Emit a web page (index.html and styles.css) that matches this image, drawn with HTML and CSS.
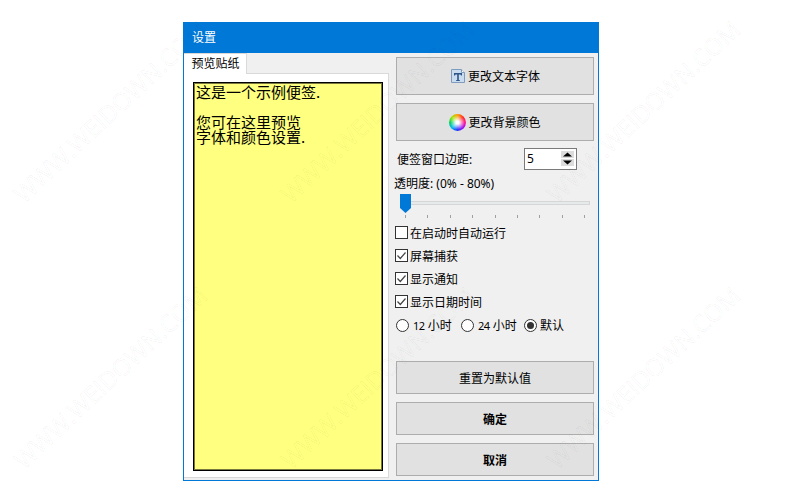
FILE: index.html
```html
<!DOCTYPE html>
<html lang="zh">
<head>
<meta charset="utf-8">
<title>设置</title>
<link rel="stylesheet" href="styles.css">
</head>
<body>
<div class="window">
  <div class="titlebar">设置</div>
  <div class="content">
    <div class="left">
      <div class="tabs"><div class="tab">预览贴纸</div></div>
      <div class="panel">
        <div class="sticky">这是一个示例便签.<br><br>您可在这里预览<br>字体和颜色设置.</div>
      </div>
    </div>
    <div class="right">
      <div class="btn-group top">
        <button class="btn big"><svg class="ico" viewBox="0 0 16 16"><path d="M1.500 1.500h10l3 3v10h-13z" fill="#c9dcf0" stroke="#7f9cbc"/><path d="M11.500 1.500v3h3" fill="#fff" stroke="#7f9cbc"/><path d="M4 5h8v2.500h-1L10.500 6.500H8.800v5.500h1v1H6.200v-1h1V6.500H5.500L5 7.500H4z" fill="#2f5488"/></svg>更改文本字体</button>
        <button class="btn big"><span class="wheel"></span>更改背景颜色</button>
      </div>
      <div class="spin-row">
        <span class="spin-label">便签窗口边距:</span>
        <div class="spin">
          <span class="spin-val">5</span>
          <span class="arrows"><span class="arr"><svg viewBox="0 0 13 7"><path d="M6.500 1.500L11 5.500H2z" fill="#000"/></svg></span><span class="arr"><svg viewBox="0 0 13 7"><path d="M6.500 5.500L2 1.500h9z" fill="#000"/></svg></span></span>
        </div>
      </div>
      <div class="opacity-label">透明度: (0% - 80%)</div>
      <div class="slider">
        <div class="track"></div>
        <svg class="thumb" viewBox="0 0 11 19"><path d="M0 0h11v14l-5.500 5L0 14z" fill="#0078d7"/></svg>
      </div>
      <div class="ticks"><i></i><i></i><i></i><i></i><i></i><i></i><i></i><i></i><i></i></div>
      <div class="checks">
        <label class="check"><span class="box"></span>在启动时自动运行</label>
        <label class="check"><span class="box"><svg viewBox="0 0 11 11"><path d="M1.500 5.500L4.300 8.500 9.500 2.500" fill="none" stroke="#444" stroke-width="1.200"/></svg></span>屏幕捕获</label>
        <label class="check"><span class="box"><svg viewBox="0 0 11 11"><path d="M1.500 5.500L4.300 8.500 9.500 2.500" fill="none" stroke="#444" stroke-width="1.200"/></svg></span>显示通知</label>
        <label class="check"><span class="box"><svg viewBox="0 0 11 11"><path d="M1.500 5.500L4.300 8.500 9.500 2.500" fill="none" stroke="#444" stroke-width="1.200"/></svg></span>显示日期时间</label>
      </div>
      <div class="radios">
        <label class="radio"><span class="dot"></span><span><span class="num">12</span> 小时</span></label>
        <label class="radio"><span class="dot"></span><span><span class="num">24</span> 小时</span></label>
        <label class="radio last"><span class="dot on"></span>默认</label>
      </div>
      <div class="btn-group bottom">
        <button class="btn">重置为默认值</button>
        <button class="btn strong">确定</button>
        <button class="btn strong">取消</button>
      </div>
    </div>
  </div>
</div>
<div class="wm wm1">WWW.WEIDOWN.COM</div>
<div class="wm wm2">WWW.WEIDOWN.COM</div>
<div class="wm wm3">WWW.WEIDOWN.COM</div>
<div class="wm wm4">WWW.WEIDOWN.COM</div>
<div class="wm wm5">WWW.WEIDOWN.COM</div>
<div class="wm wm6">WWW.WEIDOWN.COM</div>
</body>
</html>
```
FILE: styles.css
```css
* { box-sizing: border-box; }
html, body { margin: 0; padding: 0; }
body {
  width: 790px;
  height: 500px;
  background: #fff;
  overflow: hidden;
  position: relative;
  padding: 22px 0 0 183px;
  font-family: "Noto Sans", "Noto Sans CJK SC", sans-serif;
  font-size: 12px;
  color: #000;
}
.window {
  width: 416px;
  height: 459px;
  border: 1px solid #0078d7;
  border-top: 0;
  background: #f0f0f0;
  display: flex;
  flex-direction: column;
}
.titlebar {
  height: 31px;
  margin: 0 -1px;
  padding: 0 9px;
  background: #0078d7;
  color: #fff;
  line-height: 31px;
}
.content { flex: 1; display: flex; min-height: 0; }
.left { width: 205px; display: flex; flex-direction: column; padding-bottom: 2px; }
.tabs { height: 20px; display: flex; }
.tab {
  width: 63px;
  height: 21px;
  padding-left: 1px;
  background: #fff;
  border: 1px solid #d9d9d9;
  border-bottom: 0;
  border-left: 0;
  text-align: center;
  line-height: 20px;
  position: relative;
  z-index: 1;
}
.panel {
  flex: 1;
  background: #fff;
  border: 1px solid #d9d9d9;
  border-left: 0;
  padding: 8px 5px 6px 9px;
}
.sticky {
  height: 100%;
  background: #ffff80;
  border: 1px solid #000;
  box-shadow: inset 0 0 0 1px #77773f;
  padding: 1px 2px;
  font-family: "Noto Sans CJK SC", sans-serif;
  font-size: 15px;
  line-height: 15px;
}
.right { flex: 1; display: flex; flex-direction: column; padding: 4px 4px 4px 7px; }
.btn-group { display: flex; flex-direction: column; gap: 8px; }
.bottom { margin-top: auto; }
.btn {
  display: flex;
  align-items: center;
  justify-content: center;
  width: 198px;
  height: 33px;
  padding: 0;
  background: #e1e1e1;
  border: 1px solid #adadad;
  font: inherit;
  color: #000;
}
.btn.big { height: 38px; }
.btn.strong { font-weight: 700; }
.ico { width: 16px; height: 16px; margin-right: 2px; }
.wheel {
  width: 17px;
  height: 17px;
  margin-right: 2px;
  border-radius: 50%;
  background:
    radial-gradient(circle, #fff 0 12%, rgba(255,255,255,0) 62%),
    conic-gradient(#ff9a00, #ff3020, #ff1090, #a010f0, #2030ff, #00b8f0, #00d060, #a0e800, #ff9a00);
}
.spin-row { display: flex; align-items: center; justify-content: space-between; height: 21px; margin-top: 7px; width: 181px; padding-left: 1px; }
.spin {
  width: 53px;
  height: 22px;
  background: #fff;
  border: 1px solid #7a7a7a;
  display: flex;
  align-items: center;
  justify-content: space-between;
  padding: 0 2px 0 2px;
}
.arrows { display: flex; flex-direction: column; gap: 1px; }
.arr { display: flex; width: 13px; height: 7px; background: #dcdcdc; }
.arr svg { width: 13px; height: 7px; }
.opacity-label { margin-top: 6px; height: 17px; line-height: 17px; margin-left: -2px; }
.slider { position: relative; height: 19px; margin-top: 2px; padding-top: 7px; margin-left: 4px; }
.track { height: 4px; width: 190px; background: #e7eaea; border: 1px solid #d6d6d6; }
.thumb { position: absolute; left: 0; top: 0; width: 11px; height: 19px; }
.ticks { display: flex; justify-content: space-between; width: 180px; margin-left: 9px; margin-top: 2px; height: 3px; }
.ticks i { width: 1px; height: 3px; background: #a0a0a0; }
.checks { display: flex; flex-direction: column; gap: 10px; margin-top: 8px; margin-left: -1px; }
.check { display: flex; align-items: center; height: 13px; gap: 2px; }
.box { width: 13px; height: 13px; border: 1px solid #333; background: #fff; display: flex; }
.box svg { width: 11px; height: 11px; }
.radios { display: flex; margin-top: 10px; height: 14px; }
.radio { display: flex; align-items: center; gap: 4px; width: 65px; white-space: nowrap; }
.radio + .radio { width: 63px; }
.radio.last { gap: 3px; }
.num { font-size: 11px; letter-spacing: -0.5px; }
.dot { width: 13px; height: 13px; border: 1px solid #333; border-radius: 50%; background: #fff; position: relative; }
.dot.on::after {
  content: "";
  position: absolute;
  left: 2px;
  top: 2px;
  width: 7px;
  height: 7px;
  border-radius: 50%;
  background: #333;
}
.wm {
  position: absolute;
  font-family: "Open Sans", sans-serif;
  font-size: 24px;
  font-weight: 400;
  white-space: nowrap;
  color: transparent;
  -webkit-text-stroke: 1px rgba(0, 0, 0, 0.04);
  transform: translate(-50%, -50%) rotate(-43deg);
  pointer-events: none;
}
.wm1 { left: 110px; top: 111px; }
.wm2 { left: 377px; top: 111px; }
.wm3 { left: 643px; top: 111px; }
.wm4 { left: 110px; top: 377px; }
.wm5 { left: 377px; top: 377px; }
.wm6 { left: 643px; top: 377px; }
```
